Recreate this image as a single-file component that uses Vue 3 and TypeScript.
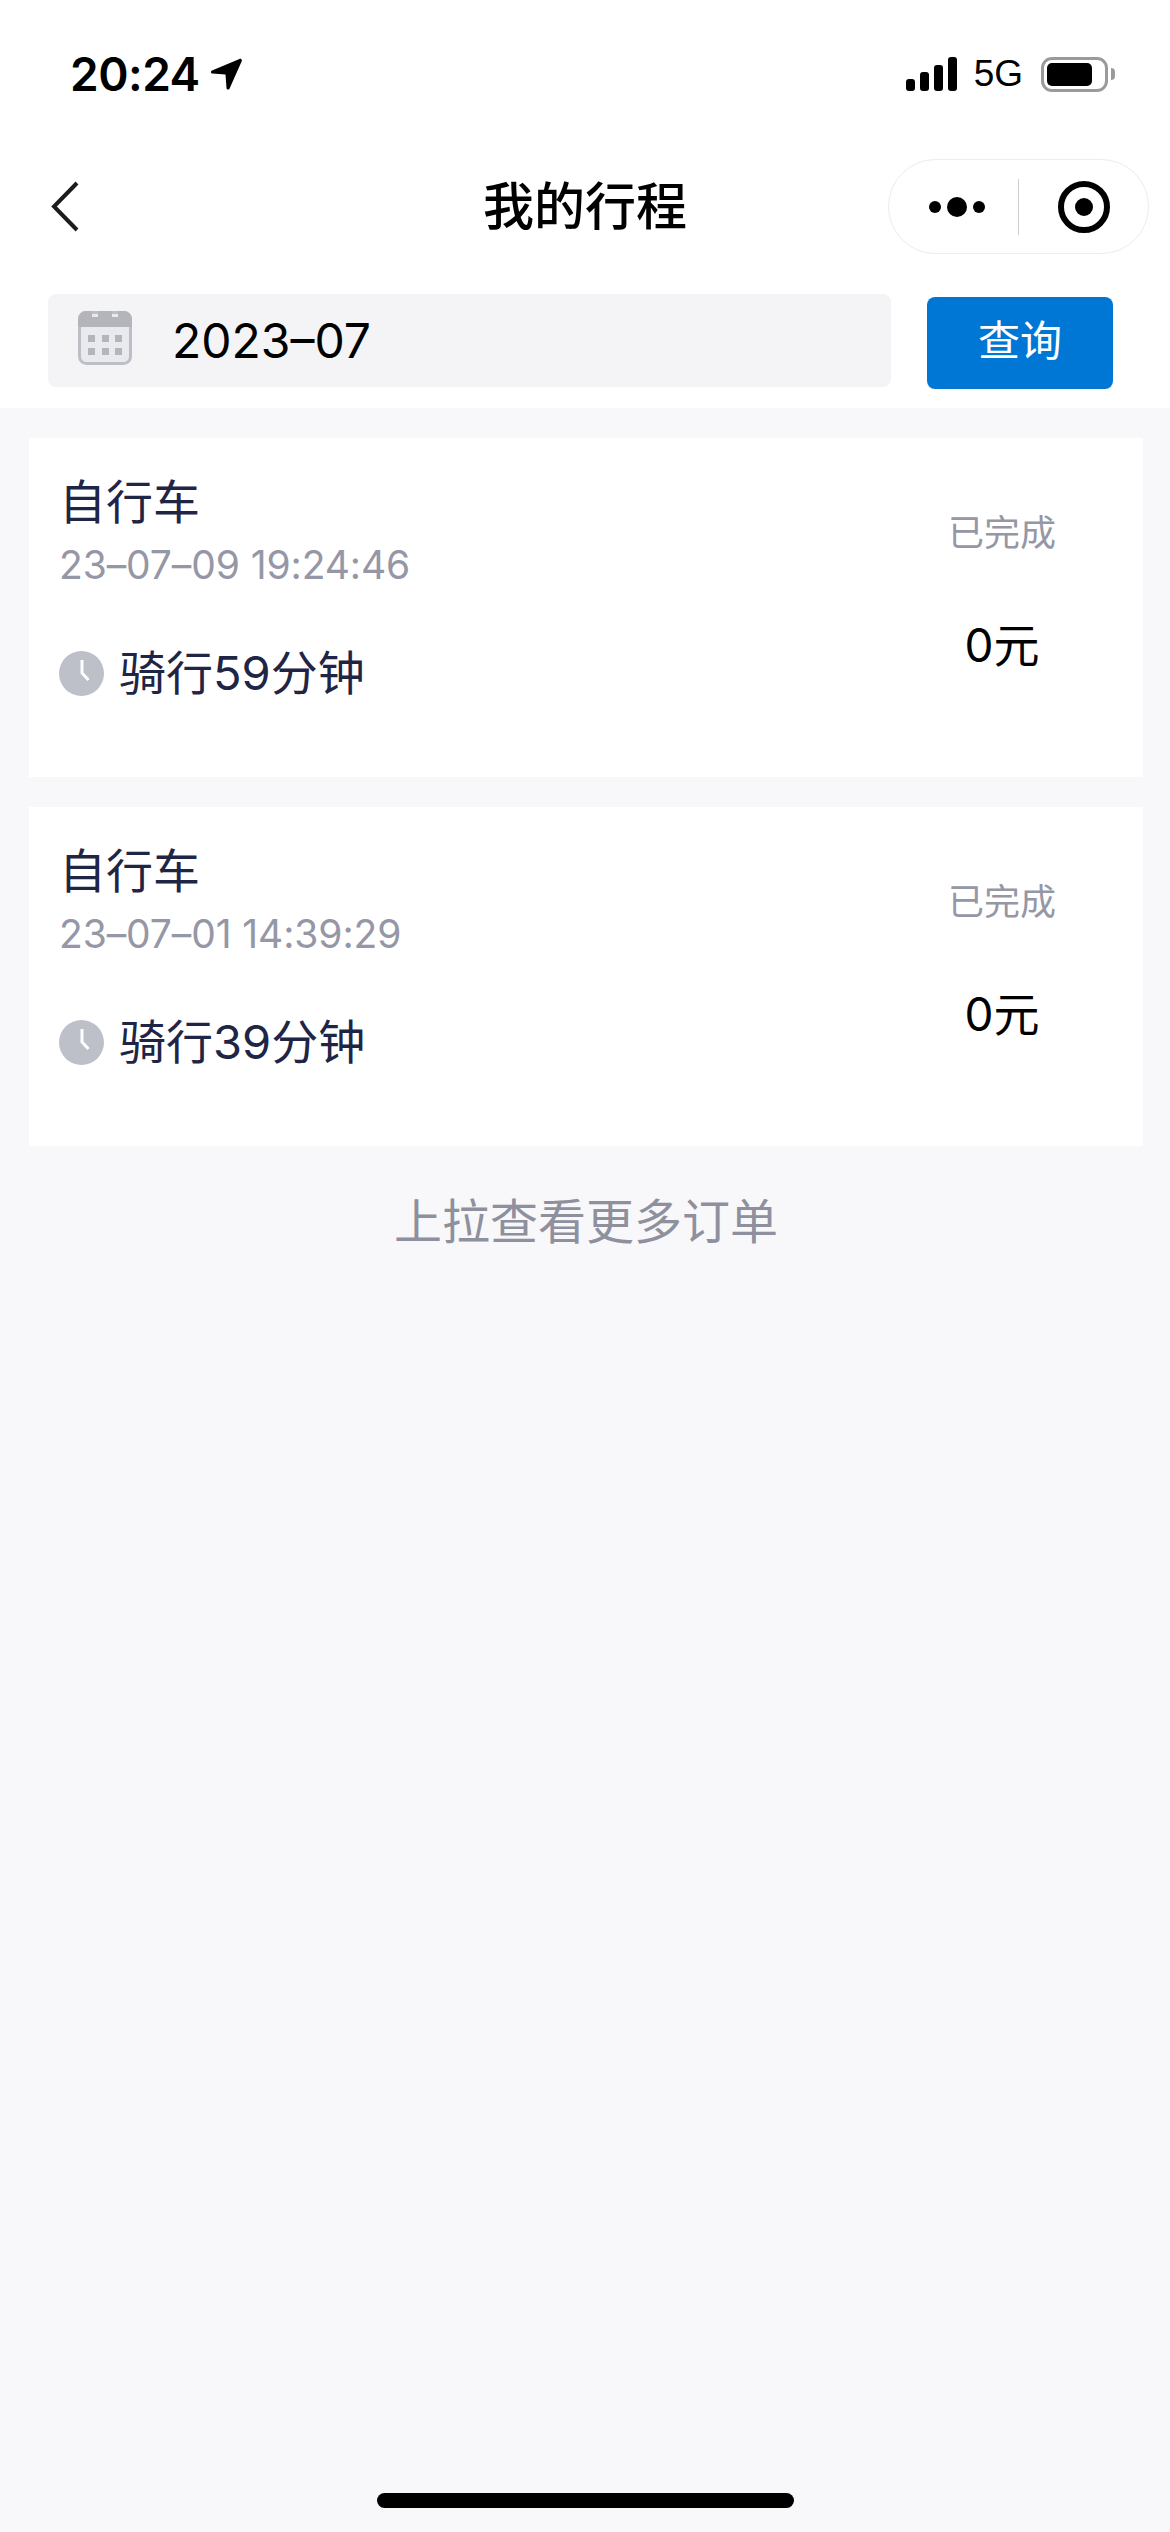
<script setup lang="ts">
const trips = [
  { id: 1, name: '自行车', time: '23–07–09 19:24:46', ride: '骑行59分钟', state: '已完成', fee: '0元' },
  { id: 2, name: '自行车', time: '23–07–01 14:39:29', ride: '骑行39分钟', state: '已完成', fee: '0元' },
]
const bars = [12, 19, 26, 34]
</script>

<template>
  <div class="page">
    <header class="top">
      <div class="status">
        <div class="status-left">
          <span class="clock-text">20:24</span>
          <svg class="loc" width="32" height="33" viewBox="0 0 32 33">
            <path d="M29.500 1 2 12.500c-1.700.7-1.300 3 .5 3.100L15.500 16.500l1 13.500c.1 1.800 2.500 2.100 3.100.4L31.700 3.200C32.300 1.700 31 .4 29.500 1Z" fill="#000" />
          </svg>
        </div>
        <div class="status-right">
          <div class="signal">
            <i v-for="h in bars" :key="h" :style="{ height: h + 'px' }"></i>
          </div>
          <span class="net">5G</span>
          <div class="battery">
            <div class="battery-body"><div class="battery-fill"></div></div>
            <div class="battery-nub"></div>
          </div>
        </div>
      </div>

      <nav class="nav">
        <svg class="back" width="28" height="51" viewBox="0 0 28 51">
          <path d="M26 2 3 25.500 26 49" fill="none" stroke="#1c1c1c" stroke-width="4" />
        </svg>
        <h1>我的行程</h1>
        <div class="capsule">
          <div class="dots"><i></i><b></b><i></i></div>
          <span class="divider"></span>
          <div class="target"><span></span></div>
        </div>
      </nav>

      <div class="search">
        <div class="field">
          <svg width="54" height="54" viewBox="0 0 54 54">
            <rect x="1.500" y="1.500" width="51" height="51" rx="7" fill="#e9eaee" stroke="#bebfc6" stroke-width="3" />
            <path d="M0 16V8a8 8 0 0 1 8-8h6v6h6V0h14v6h6V0h6a8 8 0 0 1 8 8v8Z" fill="#b4b5bb" />
            <g fill="#b4b5bc">
              <rect x="10" y="24" width="7" height="7" /><rect x="24" y="24" width="7" height="7" /><rect x="37" y="24" width="7" height="7" />
              <rect x="10" y="37" width="7" height="7" /><rect x="24" y="37" width="7" height="7" /><rect x="37" y="37" width="7" height="7" />
            </g>
          </svg>
          <span>2023–07</span>
        </div>
        <button class="query">查询</button>
      </div>
    </header>

    <main class="list">
      <article v-for="trip in trips" :key="trip.id" class="card">
        <div class="info">
          <div class="name">{{ trip.name }}</div>
          <div class="time">{{ trip.time }}</div>
          <div class="ride">
            <svg width="45" height="45" viewBox="0 0 45 45">
              <circle cx="22.500" cy="22.500" r="22.500" fill="#bdc0c9" />
              <path d="M23 9v13l6.500 7" fill="none" stroke="#fff" stroke-width="3" />
            </svg>
            <span>{{ trip.ride }}</span>
          </div>
        </div>
        <div class="side">
          <div class="state">{{ trip.state }}</div>
          <div class="fee">{{ trip.fee }}</div>
        </div>
      </article>
      <p class="more">上拉查看更多订单</p>
    </main>

    <div class="home-bar"></div>
  </div>
</template>

<style scoped>
.page {
  width: 1170px;
  height: 2532px;
  display: flex;
  flex-direction: column;
  background: #f8f8fa;
  font-family: Inter, "Noto Sans CJK SC", sans-serif;
  color: #000;
}
.top { background: #fff; height: 408px; flex: none; box-sizing: border-box; }
.status { height: 159px; display: flex; justify-content: space-between; padding: 56px 55px 0 70px; box-sizing: border-box; }
.status-left { display: flex; align-items: flex-start; gap: 10px; }
.clock-text { font-size: 46px; line-height: 36px; font-weight: 600; letter-spacing: -0.5px; }
.loc { margin-top: 2px; }
.status-right { display: flex; align-items: flex-start; }
.signal { display: flex; align-items: flex-end; gap: 5px; height: 34px; margin-top: 1px; }
.signal i { width: 9px; background: #000; border-radius: 3px; }
.net { font-size: 37px; line-height: 36px; margin-left: 17px; font-family: "Liberation Sans", sans-serif; }
.battery { display: flex; align-items: center; margin-left: 18px; height: 36px; }
.battery-body { width: 67px; height: 35px; border: 3px solid #9a9a9a; border-radius: 11px; padding: 3px; box-sizing: border-box; }
.battery-fill { width: 45px; height: 100%; background: #000; border-radius: 5px; }
.battery-nub { width: 4px; height: 12px; margin-left: 3px; background: #9a9a9a; border-radius: 0 4px 4px 0; }

.nav { height: 95px; display: flex; align-items: center; justify-content: space-between; padding: 0 21px 0 51px; position: relative; }
.nav h1 { margin: 0; font-size: 51px; line-height: 99px; font-weight: 500; position: absolute; left: 0; right: 0; text-align: center; }
.capsule { width: 261px; height: 95px; box-sizing: border-box; border: 1px solid #ececec; border-radius: 48px; display: flex; align-items: center; background: #fff; position: relative; }
.dots { display: flex; align-items: center; gap: 6px; margin-left: 40px; width: 56px; }
.dots i { width: 12px; height: 12px; border-radius: 50%; background: #000; flex: none; }
.dots b { width: 20px; height: 20px; border-radius: 50%; background: #000; flex: none; }
.divider { width: 1px; height: 56px; background: #cfcfcf; margin-left: 33px; }
.target { width: 52px; height: 52px; margin-left: 39px; box-sizing: border-box; border: 6px solid #000; border-radius: 50%; display: flex; align-items: center; justify-content: center; }
.target span { width: 18px; height: 18px; border-radius: 50%; background: #000; }

.search { display: flex; align-items: flex-start; padding: 40px 57px 0 48px; }
.field { width: 843px; height: 93px; background: #f4f4f7; border-radius: 8px; display: flex; align-items: center; box-sizing: border-box; padding-left: 30px; gap: 40px; font-size: 48px; }
.field svg { flex: none; margin-bottom: 5px; }
.query { width: 186px; height: 92px; margin: 3px 0 0 36px; border: 0; border-radius: 8px; background: #0077d4; color: #fff; font: inherit; font-size: 42px; line-height: 88px; padding: 0 0 4px; }

.list { padding: 30px 27px 0 29px; display: flex; flex-direction: column; gap: 30px; }
.card { height: 339px; background: #fff; display: flex; justify-content: space-between; box-sizing: border-box; padding: 40px 41px 0 30px; }
.name { font-size: 47px; line-height: 48px; color: #1f2544; }
.time { font-size: 39px; line-height: 40px; margin-top: 19px; letter-spacing: -0.1px; color: #9597a6; }
.ride { display: flex; align-items: center; gap: 15px; margin-top: 64px; font-size: 47px; line-height: 48px; color: #1f2544; }
.side { width: 200px; text-align: center; padding-top: 37px; }
.state { font-size: 36px; line-height: 36px; color: #9597a6; }
.fee { font-size: 46px; line-height: 48px; margin-top: 70px; }
.more { margin: 22px 0 0; text-align: center; font-size: 48px; line-height: 48px; color: #8f909e; }

.home-bar { width: 417px; height: 15px; border-radius: 8px; background: #000; margin: auto auto 24px; }
</style>
